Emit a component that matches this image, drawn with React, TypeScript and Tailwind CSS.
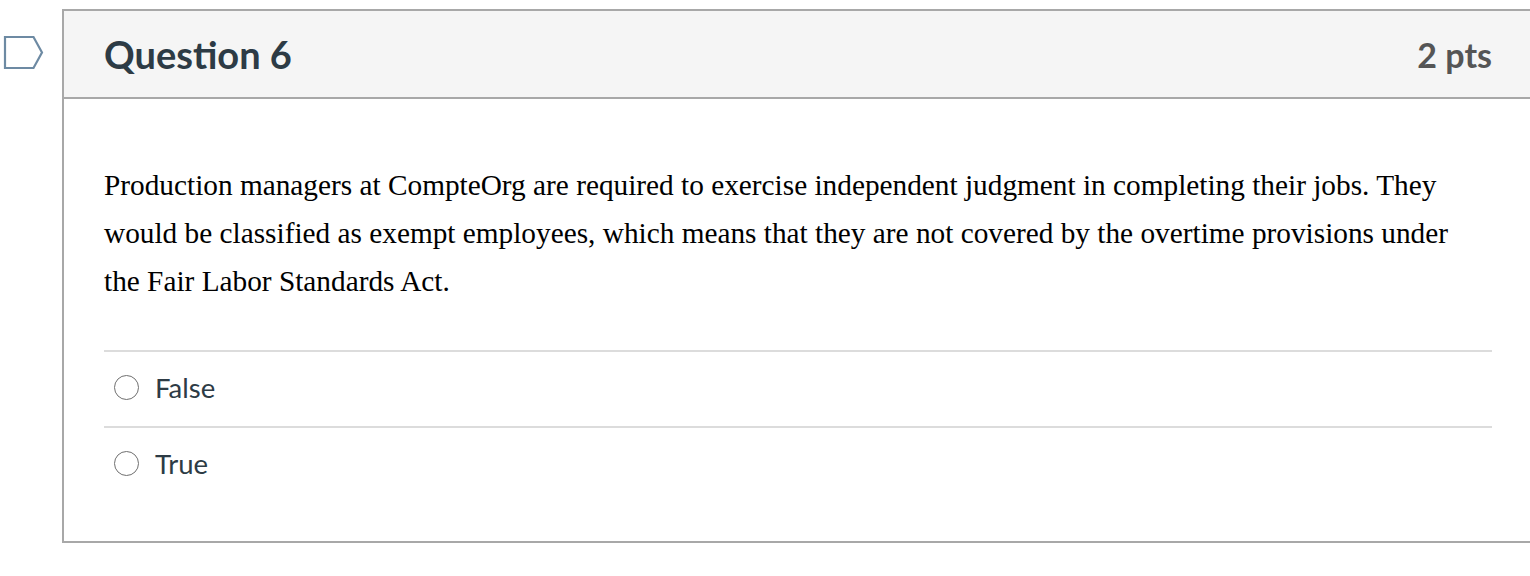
import React from "react";

const answers = ["False", "True"];

function FlagIcon() {
  return (
    <svg width="46" height="36" viewBox="0 0 46 36" className="block">
      <path
        d="M5 2 H33.5 L42 17.5 L33.5 33 H5 Z"
        fill="none"
        stroke="#6d8aa3"
        strokeWidth="2.2"
        strokeLinejoin="miter"
      />
    </svg>
  );
}

const AnswerRow = ({ label }: { label: string }) => {
  return (
    <div className="border-t-2 border-[#dcdcdc]">
      <label className="flex h-[74px] items-center pl-[10px] pb-[3px]">
        <span className="block h-[25px] w-[25px] rounded-full border-[1.5px] border-[#6f6f6f] bg-white" />
        <span className="ml-[16px] font-['Lato'] text-[27.5px] text-[#2d3b45]">
          {label}
        </span>
      </label>
    </div>
  );
};

export default function App() {
  return (
    <div className="w-[1530px] h-[576px] overflow-hidden bg-white">
      <div className="flex pt-[9px]">
        <div className="w-[62px] shrink-0 pt-[26px]">
          <FlagIcon />
        </div>
        <div className="w-[1472px] shrink-0 border-2 border-[#a8a8a8]">
          <div className="flex h-[88px] items-center justify-between border-b-2 border-[#a8a8a8] bg-[#f5f5f5] px-[40px] font-['Lato']">
            <h2 className="text-[38px] font-bold text-[#2d3b45]">Question 6</h2>
            <div className="text-[34px] font-bold text-[#555555]">2 pts</div>
          </div>
          <div className="px-[40px] pt-[62px] pb-[39px]">
            <p className="max-w-[1370px] font-['Liberation_Serif'] text-[29.3px] leading-[48px] text-black">
              Production managers at CompteOrg are required to exercise independent judgment in completing their jobs. They
              would be classified as exempt employees, which means that they are not covered by the overtime provisions under
              the Fair Labor Standards Act.
            </p>
            <div className="mt-[45px]">
              {answers.map((a) => (
                <AnswerRow key={a} label={a} />
              ))}
            </div>
          </div>
        </div>
      </div>
    </div>
  );
}
